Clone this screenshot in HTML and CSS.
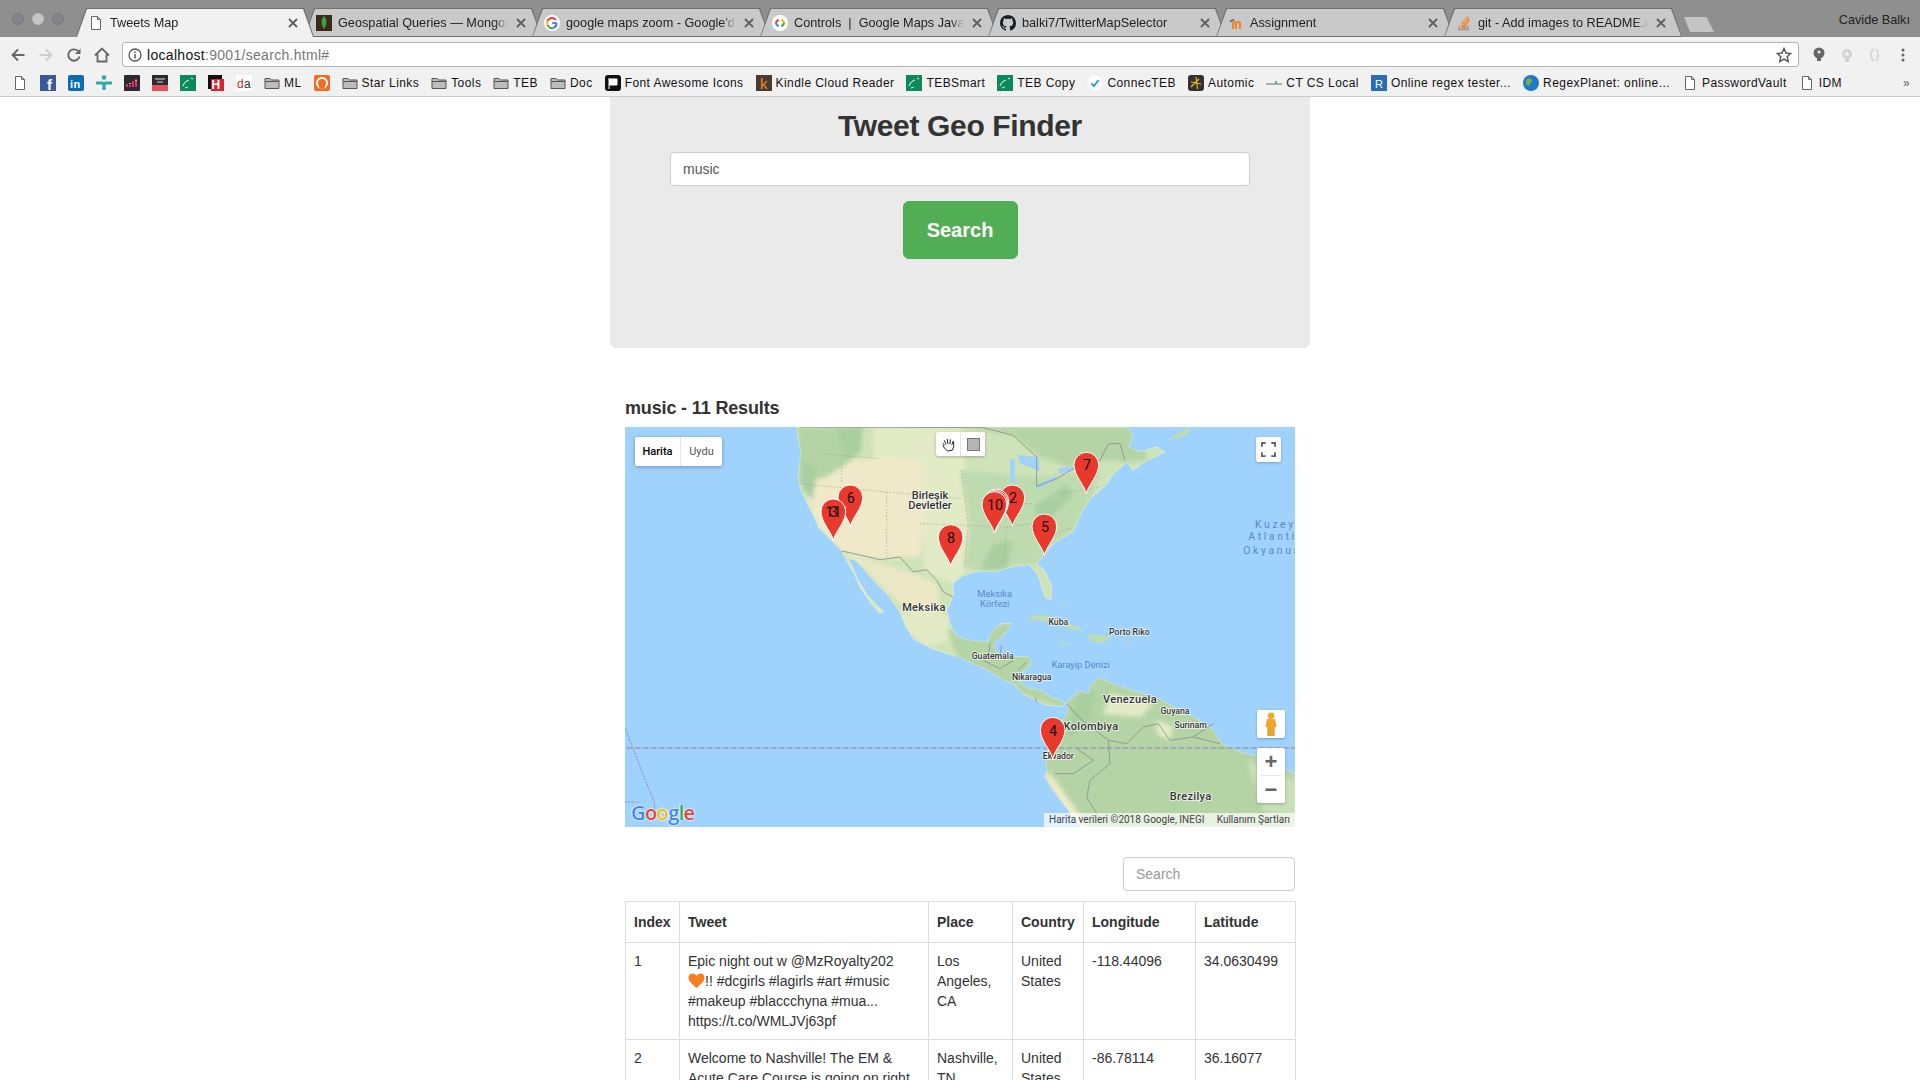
FILE: index.html
```html
<!DOCTYPE html>
<html>
  <head>
    <meta charset="utf-8">
    <title>Tweets Map</title>
    <link rel="stylesheet" href="styles.css">
  </head>
  <body>
    <svg class="defs" width="0" height="0">
      <symbol id="doc" viewBox="0 0 16 16"><path d="M3.5 1.5h6l3 3v10h-9z M9.5 1.5v3h3" fill="#fff" stroke="#666" stroke-width="1"/></symbol>
      <symbol id="folder" viewBox="0 0 16 16"><path d="M1 3.5h5l1.5 1.5h7.500v8.500h-14z" fill="#bdbdbd" stroke="#555"/><path d="M1 6.500h14" stroke="#555"/></symbol>
      <symbol id="x" viewBox="0 0 10 10"><path d="M1 1l8 8M9 1l-8 8" stroke="#5f5f5f" stroke-width="1.800"/></symbol>
      <symbol id="teb" viewBox="0 0 16 16"><rect width="16" height="16" fill="#0a8a5c"/><path d="M3 11c1-3 3-5 6-6M11 3l2 1M5 13l3-1" stroke="#bfe8d4" stroke-width="1.200" fill="none"/></symbol>
    </svg>

    <div class="tabstrip">
      <div class="lights">
        <span class="light"></span>
        <span class="light light-mid"></span>
        <span class="light"></span>
      </div>
      <div class="tab tab-active">
        <svg class="favicon"><use href="#doc"/></svg>
        <span class="tab-title">Tweets Map</span>
        <svg class="tab-close"><use href="#x"/></svg>
      </div>
      <div class="tab">
        <svg class="favicon" viewBox="0 0 16 16"><rect width="16" height="16" fill="#3b2a1c"/><path d="M8 1c3 3 3.500 8 0 13c-3.500-5-3-10 0-13z" fill="#3fa037"/></svg>
        <span class="tab-title">Geospatial Queries — MongoDB Manual</span>
        <svg class="tab-close"><use href="#x"/></svg>
      </div>
      <div class="tab">
        <svg class="favicon" viewBox="0 0 16 16"><circle cx="8" cy="8" r="8" fill="#fff"/><path d="M12.500 8H8.300" stroke="#4285f4" stroke-width="2"/><path d="M12 5a5 5 0 0 0-4-2" stroke="#ea4335" stroke-width="2" fill="none"/><path d="M8 3a5 5 0 0 0-4.500 3" stroke="#ea4335" stroke-width="2" fill="none"/><path d="M3.500 6a5 5 0 0 0 0 4" stroke="#fbbc05" stroke-width="2" fill="none"/><path d="M3.500 10a5 5 0 0 0 6 3" stroke="#34a853" stroke-width="2" fill="none"/><path d="M9.500 13a5 5 0 0 0 3-5" stroke="#4285f4" stroke-width="2" fill="none"/></svg>
        <span class="tab-title">google maps zoom - Google'da Ara</span>
        <svg class="tab-close"><use href="#x"/></svg>
      </div>
      <div class="tab">
        <svg class="favicon" viewBox="0 0 16 16"><circle cx="8" cy="8" r="8" fill="#fff"/><path d="M6.500 4.500L3.500 8" stroke="#ea4335" stroke-width="2"/><path d="M3.500 8l3 3.500" stroke="#4285f4" stroke-width="2"/><path d="M9.500 4.500l3 3.500" stroke="#fbbc05" stroke-width="2"/><path d="M12.500 8l-3 3.500" stroke="#34a853" stroke-width="2"/></svg>
        <span class="tab-title">Controls &nbsp;|&nbsp; Google Maps JavaScript API</span>
        <svg class="tab-close"><use href="#x"/></svg>
      </div>
      <div class="tab">
        <svg class="favicon" viewBox="0 0 16 16"><path d="M8 0C3.580 0 0 3.580 0 8c0 3.540 2.290 6.530 5.470 7.590.4.070.55-.17.55-.38 0-.19-.01-.82-.01-1.490-2.010.37-2.530-.49-2.690-.94-.09-.23-.48-.94-.82-1.130-.28-.15-.68-.52-.01-.53.63-.01 1.080.58 1.230.82.72 1.210 1.870.87 2.330.66.07-.52.28-.87.51-1.070-1.780-.2-3.640-.89-3.640-3.950 0-.87.31-1.590.82-2.150-.08-.2-.36-1.020.08-2.120 0 0 .67-.21 2.200.82.64-.18 1.320-.27 2-.27.68 0 1.360.09 2 .27 1.530-1.040 2.200-.82 2.200-.82.44 1.100.16 1.920.08 2.120.51.56.82 1.270.82 2.150 0 3.070-1.870 3.750-3.650 3.950.29.25.54.73.54 1.480 0 1.070-.01 1.930-.01 2.200 0 .21.15.46.55.38A8.013 8.013 0 0016 8c0-4.420-3.580-8-8-8z" fill="#1b1f23"/></svg>
        <span class="tab-title">balki7/TwitterMapSelector</span>
        <svg class="tab-close"><use href="#x"/></svg>
      </div>
      <div class="tab">
        <svg class="favicon" viewBox="0 0 16 16"><path d="M5 14V8.500c0-2 3-2 3 0V14M8 8.500c0-2 4-2 4 0V14" fill="none" stroke="#f58220" stroke-width="2"/><path d="M1 6l4-2 2 1-4 2z" fill="#666"/></svg>
        <span class="tab-title">Assignment</span>
        <svg class="tab-close"><use href="#x"/></svg>
      </div>
      <div class="tab">
        <svg class="favicon" viewBox="0 0 16 16"><path d="M3 10.500v4h9v-4" fill="none" stroke="#999" stroke-width="1.300"/><path d="M5 12.500h5.500M5 10.500l5.500.6M5.500 8.200l5.300 1.500M6.800 5.800l4.700 2.700M8.800 3.500l3.800 3.900M11 1.500l2.300 4.800" stroke="#f48024" stroke-width="1.300"/></svg>
        <span class="tab-title">git - Add images to README.md on GitHub</span>
        <svg class="tab-close"><use href="#x"/></svg>
      </div>
      <div class="newtab"></div>
      <div class="username">Cavide Balkı</div>
    </div>

    <div class="toolbar">
      <svg class="nav-icon" viewBox="0 0 16 16"><path d="M14.500 8H2.500M8 2.500L2.500 8 8 13.500" fill="none" stroke="#666" stroke-width="1.800"/></svg>
      <svg class="nav-icon" viewBox="0 0 16 16"><path d="M1.500 8h12M8 2.500L13.500 8 8 13.500" fill="none" stroke="#cfcfcf" stroke-width="1.800"/></svg>
      <svg class="nav-icon" viewBox="0 0 16 16"><path d="M13.500 9.500A5.700 5.700 0 1 1 12 4" fill="none" stroke="#666" stroke-width="1.900"/><path d="M14.500 1.500v5.500h-5.500z" fill="#666"/></svg>
      <svg class="nav-icon" viewBox="0 0 16 16"><path d="M1 8.500L8 1.500l7 7M3.500 7v7.500h9V7" fill="none" stroke="#666" stroke-width="1.800"/></svg>
      <div class="omnibox">
        <svg class="info-icon" viewBox="0 0 14 14"><circle cx="7" cy="7" r="6" fill="none" stroke="#555" stroke-width="1.300"/><path d="M7 6v4.500M7 3.500v1.400" stroke="#555" stroke-width="1.500"/></svg>
        <span class="url-host">localhost</span><span class="url-rest">:9001/search.html#</span>
        <svg class="star-icon" viewBox="0 0 16 16"><path d="M8 1.500l2 4.500 4.800.5-3.600 3.200 1 4.800L8 12.100l-4.200 2.400 1-4.800L1.200 6.500 6 6z" fill="none" stroke="#555" stroke-width="1.400"/></svg>
      </div>
      <div class="ext-icons">
        <svg class="ext-icon" viewBox="0 0 16 16"><circle cx="8" cy="6" r="5.500" fill="#666"/><rect x="6" y="6" width="4" height="8" fill="#666"/><circle cx="8" cy="5" r="1.500" fill="#f1f1f1"/></svg>
        <svg class="ext-icon" viewBox="0 0 16 16"><circle cx="8" cy="7" r="5" fill="#d2d2d2"/><circle cx="8" cy="7" r="2" fill="#f1f1f1"/><rect x="6" y="12" width="4" height="3" fill="#cfcfcf"/></svg>
        <svg class="ext-icon" viewBox="0 0 16 16"><path d="M7 2C3 4 3 11 7 14M9 2c3 3 3 9 0 12" fill="none" stroke="#d8d8d8" stroke-width="2"/></svg>
        <svg class="ext-icon" viewBox="0 0 16 16"><circle cx="8" cy="3" r="1.500" fill="#666"/><circle cx="8" cy="8" r="1.500" fill="#666"/><circle cx="8" cy="13" r="1.500" fill="#666"/></svg>
      </div>
    </div>

    <div class="bookmarks">
      <div class="bm"><svg class="bm-icon"><use href="#doc"/></svg></div>
      <div class="bm"><svg class="bm-icon" viewBox="0 0 16 16"><rect width="16" height="16" fill="#3b5998"/><text class="ico-f" x="7" y="15">f</text></svg></div>
      <div class="bm"><svg class="bm-icon" viewBox="0 0 16 16"><rect width="16" height="16" rx="2" fill="#0b6cb0"/><text class="ico-in" x="2" y="13">in</text></svg></div>
      <div class="bm"><svg class="bm-icon" viewBox="0 0 16 16"><circle cx="8" cy="2.500" r="2.300" fill="#2fa9a0"/><path d="M0 8h6l2 1 2-1h6M8 8v7" stroke="#2fa9a0" stroke-width="3.200"/></svg></div>
      <div class="bm"><svg class="bm-icon" viewBox="0 0 16 16"><rect width="16" height="16" rx="1" fill="#2a2a33"/><path d="M3 12V9M6 12V10M9 12V6M12 12V4" stroke="#e0296f" stroke-width="2"/><path d="M6 9V8M12 6V5" stroke="#f4c21f" stroke-width="2"/></svg></div>
      <div class="bm"><svg class="bm-icon" viewBox="0 0 16 16"><rect width="16" height="10" fill="#2b2b2b"/><rect y="10" width="16" height="6" fill="#e8505b"/><path d="M3 4h10M5 7h6" stroke="#ddd"/></svg></div>
      <div class="bm"><svg class="bm-icon"><use href="#teb"/></svg></div>
      <div class="bm"><svg class="bm-icon" viewBox="0 0 16 16"><rect width="14" height="14" fill="#111"/><rect x="3" y="4" width="13" height="12" fill="#d9272e"/><text class="ico-h" x="3.500" y="14">H</text></svg></div>
      <div class="bm"><svg class="bm-icon" viewBox="0 0 16 16"><rect width="16" height="16" fill="#fff"/><text class="ico-da" x="1" y="13"><tspan fill="#e3212a">d</tspan><tspan fill="#333">a</tspan></text></svg></div>
      <div class="bm"><svg class="bm-icon"><use href="#folder"/></svg>ML</div>
      <div class="bm"><svg class="bm-icon" viewBox="0 0 16 16"><rect width="16" height="16" rx="2" fill="#f26d21"/><circle cx="8" cy="8" r="5" fill="none" stroke="#fff" stroke-width="2"/><circle cx="8" cy="11" r="3" fill="#f26d21"/></svg></div>
      <div class="bm"><svg class="bm-icon"><use href="#folder"/></svg>Star Links</div>
      <div class="bm"><svg class="bm-icon"><use href="#folder"/></svg>Tools</div>
      <div class="bm"><svg class="bm-icon"><use href="#folder"/></svg>TEB</div>
      <div class="bm"><svg class="bm-icon"><use href="#folder"/></svg>Doc</div>
      <div class="bm"><svg class="bm-icon" viewBox="0 0 16 16"><rect width="16" height="16" rx="3" fill="#111"/><path d="M4 3v11M4 4h8v6H4" fill="#fff" stroke="#fff"/></svg>Font Awesome Icons</div>
      <div class="bm"><svg class="bm-icon" viewBox="0 0 16 16"><rect width="16" height="16" fill="#4a3a30"/><text class="ico-k" x="4" y="14">k</text></svg>Kindle Cloud Reader</div>
      <div class="bm"><svg class="bm-icon"><use href="#teb"/></svg>TEBSmart</div>
      <div class="bm"><svg class="bm-icon"><use href="#teb"/></svg>TEB Copy</div>
      <div class="bm"><svg class="bm-icon" viewBox="0 0 16 16"><circle cx="8" cy="8" r="7.500" fill="#fff"/><path d="M4.500 8.500l2.500 2.500 4.500-6" fill="none" stroke="#2a9fe0" stroke-width="2"/></svg>ConnecTEB</div>
      <div class="bm"><svg class="bm-icon" viewBox="0 0 16 16"><rect width="16" height="16" rx="3" fill="#333"/><path d="M8 2l1.500 12M3 7l10 2M3 12l8-8" stroke="#e8b923" stroke-width="1.200"/></svg>Automic</div>
      <div class="bm"><svg class="bm-icon" viewBox="0 0 16 16"><path d="M0 9h16" stroke="#999" stroke-width="1.500"/><path d="M10 6v3" stroke="#6a9" stroke-width="2"/></svg>CT CS Local</div>
      <div class="bm"><svg class="bm-icon" viewBox="0 0 16 16"><rect width="16" height="16" fill="#2a6db5"/><text class="ico-r" x="4" y="13">R</text></svg>Online regex tester...</div>
      <div class="bm"><svg class="bm-icon" viewBox="0 0 16 16"><circle cx="8" cy="8" r="8" fill="#1f78c8"/><path d="M3 5c3-3 6-2 6 1s-3 2-3 5c-2 0-4-3-3-6z" fill="#6fae55"/></svg>RegexPlanet: online...</div>
      <div class="bm"><svg class="bm-icon"><use href="#doc"/></svg>PasswordVault</div>
      <div class="bm"><svg class="bm-icon"><use href="#doc"/></svg>IDM</div>
      <div class="bm-more">»</div>
    </div>

    <div class="page">
      <div class="container">
        <div class="jumbotron">
          <h1 class="title">Tweet Geo Finder</h1>
          <input class="search-input" type="text" value="music">
          <button class="search-btn" type="button">Search</button>
        </div>

        <h4 class="results-title">music - 11 Results</h4>

        <div class="map">
          <svg class="map-canvas" viewBox="-465 0 2010 1200">
            <defs>
              <path id="land" d="M50,0 L55,30 62,70 60,110 55,150 62,185 80,225 100,265 118,305 150,335 185,372 205,410 235,460 262,505 290,535 312,555 298,558 270,525 240,480 222,430 205,395 225,398 255,430 285,465 325,505 360,555 378,600 400,635 450,662 500,680 545,692 585,712 625,730 665,755 705,772 728,800 760,815 800,835 840,838 862,828 865,850 850,880 838,930 815,958 798,990 802,1030 795,1050 820,1090 850,1130 880,1170 905,1200 L1545,1200 1545,1040 1500,1020 1440,990 1380,975 1325,950 1295,905 1245,872 1185,842 1130,812 1060,792 1000,772 960,752 935,772 925,800 905,792 875,812 855,832 835,818 812,812 785,792 750,785 722,772 718,745 755,708 745,690 705,690 650,680 640,650 668,625 695,590 665,590 635,615 625,645 580,642 530,630 510,592 500,550 520,505 518,470 545,448 590,432 650,432 700,418 748,412 775,445 795,510 812,518 815,480 795,432 770,410 820,350 880,312 905,255 935,210 975,178 1000,140 1040,105 1060,130 1100,100 1155,75 1130,60 1080,75 1045,60 1060,25 1040,0 Z"/>
              <clipPath id="land-clip"><use href="#land"/></clipPath>
              <filter id="soft" x="-5%" y="-5%" width="110%" height="110%"><feGaussianBlur stdDeviation="6"/></filter>
              <path id="pin" d="M0 0C-6 -27 -37 -54 -37 -87A37 37 0 1 1 37 -87C37 -54 6 -27 0 0Z"/>
            </defs>

            <rect class="water" x="-465" y="0" width="2010" height="1200"/>
            <use href="#land" class="land"/>
            <g clip-path="url(#land-clip)">
              <g filter="url(#soft)">
                <path class="land-pale" d="M280,0 L545,0 565,300 560,430 520,470 430,430 430,290 420,120 280,100Z"/>
                <path class="land-tan" d="M100,90 L425,100 430,300 420,390 360,390 300,398 245,385 185,372 150,335 118,305 80,225Z"/>
                <path class="land-mex" d="M190,375 L400,440 470,470 480,560 400,560 330,500 250,420Z"/>
                <path class="land-pale" d="M205,395 L320,520 300,560 230,470Z M345,560 L500,560 510,640 440,660 390,620Z"/>
                <path class="land-green" d="M540,130 L780,150 960,130 935,210 880,312 820,350 770,410 700,415 590,430 550,420 570,300Z"/>
                <path class="land-forest" d="M540,0 L1080,0 1100,100 1040,105 960,100 880,125 780,90 700,25Z M50,0 L170,0 230,90 140,150 55,170Z"/>
                <path class="land-forest" d="M500,610 L700,585 770,700 790,780 960,740 1545,760 1545,1200 905,1200 815,1045 790,1030 780,960 860,850 700,790 540,710Z"/>
                <path class="land-dark" d="M170,0 L250,0 240,80 190,100Z M65,100 L110,120 100,220 70,190Z M760,240 L860,170 880,200 790,300Z M640,350 L700,340 680,430 600,430Z M890,800 L950,790 930,880 860,940Z"/>
                <path class="land-pale" d="M990,800 L1120,830 1080,870 970,860Z M1130,880 L1180,900 1170,940 1130,920Z"/>
                <path class="land-light" d="M1400,1000 L1545,1060 1545,1200 1450,1150Z"/>
                <path class="land-tan" d="M795,1045 L815,1045 925,1200 880,1200Z"/>
              </g>
            </g>

            <path class="water" d="M690,94 L705,100 704,170 692,165Z M712,84 L775,90 780,132 745,118 722,112Z M768,178 L825,146 832,156 775,184Z M832,126 L880,118 882,128 840,140Z"/>
            <path class="island" d="M1175,30 L1230,0 1225,22 1190,36Z M740,575 Q790,550 850,585 Q890,595 910,612 L870,605 Q810,580 740,578Z M925,622 L1000,630 960,650 930,640Z M845,645 L880,650 850,653Z M1035,645 L1062,648 1038,652Z M850,525 L858,545 848,535Z"/>

            <path class="border" d="M185,372 L245,385 300,398 360,390 400,435 440,428 470,460 490,495 520,510"/>
            <path class="border" d="M60,0 L610,2 700,25 770,90 770,178 830,155 880,125 960,100 985,50 1020,50 1035,100"/>
            <path class="border" d="M630,650 L625,690 660,685 665,655M610,700 L660,725 700,700 M740,705 L715,730 M765,810 L770,825"/>
            <path class="border" d="M860,830 L895,870 985,940 1040,950 1090,900 1135,890M985,940 L990,1010 930,1060 920,1110 950,1160 M890,965 L940,1000 880,1040 825,1040 M1135,890 L1170,940 1240,930 1300,890 M1240,930 L1320,950"/>
            <path class="state" d="M120,80 L300,95 M60,170 L320,195 545,215 M320,195 L320,395 M185,90 L185,170 M420,290 L560,295 680,300 760,290 M545,130 L565,290 555,420 M680,300 L670,410 M620,230 L760,230 M780,340 L880,300 M840,200 L960,180"/>

            <path class="equator" d="M-460,963 L1545,963"/>
            <path class="dateline" d="M-465,903 L-378,1125 -375,1155"/>
            <path class="dateline" d="M-465,1125 L-420,1125"/>

            <text class="lbl" x="450" y="217">Birleşik</text>
            <text class="lbl" x="450" y="247">Devletler</text>
            <text class="lbl lbl-big" x="432" y="553">Meksika</text>
            <text class="lbl lbl-big" x="933" y="908">Kolombiya</text>
            <text class="lbl lbl-big" x="1050" y="827">Venezuela</text>
            <text class="lbl lbl-big" x="1232" y="1120">Brezilya</text>
            <text class="lbl lbl-sm" x="1185" y="861">Guyana</text>
            <text class="lbl lbl-sm" x="1232" y="903">Surinam</text>
            <text class="lbl lbl-sm" x="835" y="996">Ekvador</text>
            <text class="lbl lbl-sm" x="638" y="696">Guatemala</text>
            <text class="lbl lbl-sm" x="755" y="760">Nikaragua</text>
            <text class="lbl lbl-sm" x="835" y="593">Küba</text>
            <text class="lbl lbl-sm" x="1048" y="623">Porto Riko</text>
            <text class="lbl-water" x="644" y="510">Meksika</text>
            <text class="lbl-water" x="644" y="540">Körfezi</text>
            <text class="lbl-water" x="902" y="724">Karayip Denizi</text>
            <text class="lbl-ocean" x="1425" y="302">Kuzey</text>
            <text class="lbl-ocean" x="1405" y="340">Atlantik</text>
            <text class="lbl-ocean" x="1390" y="380">Okyanusu</text>

            <use href="#pin" class="pin" x="211" y="298"/>
            <text class="pin-num" x="212" y="229">6</text>
            <use href="#pin" class="pin" x="160" y="340"/>
            <use href="#pin" class="pin" x="160" y="340"/>
            <text class="pin-num" x="160" y="271">11</text>
            <text class="pin-num" x="161" y="271">3</text>
            <use href="#pin" class="pin" x="512" y="417"/>
            <text class="pin-num" x="513" y="349">8</text>
            <use href="#pin" class="pin" x="697" y="298"/>
            <text class="pin-num" x="699" y="229">2</text>
            <use href="#pin" class="pin" x="649" y="310"/>
            <use href="#pin" class="pin" x="646" y="314"/>
            <use href="#pin" class="pin" x="643" y="318"/>
            <text class="pin-num" x="645" y="250">10</text>
            <use href="#pin" class="pin" x="793" y="385"/>
            <text class="pin-num" x="795" y="316">5</text>
            <use href="#pin" class="pin" x="919" y="200"/>
            <text class="pin-num" x="921" y="129">7</text>
            <use href="#pin" class="pin" x="818" y="995"/>
            <text class="pin-num" x="819" y="928">4</text>
          </svg>

          <div class="map-type">
            <span class="map-type-on">Harita</span>
            <span class="map-type-off">Uydu</span>
          </div>

          <div class="draw-tools">
            <span class="draw-tool">
              <svg class="hand-icon" viewBox="0 0 16 16"><path d="M4 9L2 6.500M5.500 8L3.500 3.500M7.500 7.500L6.500 2M9.500 7.500L10 2.500M11.500 8.500L13 4.500C14 7 14 11 12 14L7 15 3.500 11.500 2 8.500" fill="#fff" stroke="#111" stroke-width="1"/></svg>
            </span>
            <span class="draw-tool draw-tool-shape"><span class="square-icon"></span></span>
          </div>

          <div class="map-btn fullscreen">
            <svg class="fs-icon" viewBox="0 0 16 16"><path d="M1 5V1h4M11 1h4v4M15 11v4h-4M5 15H1v-4" fill="none" stroke="#666" stroke-width="2"/></svg>
          </div>

          <div class="map-btn pegman">
            <svg class="peg-icon" viewBox="0 0 12 26"><circle cx="6" cy="4" r="3.500" fill="#f5a623"/><path d="M2 8h8l1.500 8-2-.5V26H6.500v-8h-1v8H2.500V15.500l-2 .5z" fill="#f5a623" stroke="#c9821a" stroke-width=".6"/></svg>
          </div>

          <div class="zoom-ctl">
            <span class="zoom-plus">+</span>
            <span class="zoom-minus">−</span>
          </div>

          <div class="google-logo"><span class="g-blue">G</span><span class="g-red">o</span><span class="g-yellow">o</span><span class="g-blue">g</span><span class="g-green">l</span><span class="g-red">e</span></div>

          <div class="attribution">
            <span>Harita verileri ©2018 Google, INEGI</span>
            <span>Kullanım Şartları</span>
          </div>
        </div>

        <div class="table-search">
          <input class="filter-input" type="text" placeholder="Search">
        </div>

        <table class="results">
          <thead>
            <tr>
              <th class="col-index">Index</th>
              <th class="col-tweet">Tweet</th>
              <th class="col-place">Place</th>
              <th class="col-country">Country</th>
              <th class="col-lon">Longitude</th>
              <th class="col-lat">Latitude</th>
            </tr>
          </thead>
          <tbody>
            <tr>
              <td>1</td>
              <td>Epic night out w @MzRoyalty202<br><svg class="heart" viewBox="0 0 16 16"><path d="M8 15C3 11 0 8 0 4.800 0 2 2 .5 4 .5 6 .5 7.300 1.500 8 3 8.700 1.500 10 .5 12 .5c2 0 4 1.500 4 4.300C16 8 13 11 8 15z" fill="#f4801f"/></svg>!! #dcgirls #lagirls #art #music<br>#makeup #blaccchyna #mua...<br>https://t.co/WMLJVj63pf</td>
              <td>Los Angeles, CA</td>
              <td>United States</td>
              <td>-118.44096</td>
              <td>34.0630499</td>
            </tr>
            <tr>
              <td>2</td>
              <td>Welcome to Nashville! The EM &amp;<br>Acute Care Course is going on right</td>
              <td>Nashville, TN</td>
              <td>United States</td>
              <td>-86.78114</td>
              <td>36.16077</td>
            </tr>
          </tbody>
        </table>
      </div>
    </div>
  </body>
</html>
```

FILE: styles.css
```css
html, body {
  height: 100%;
  margin: 0;
  overflow: hidden;
}

body {
  font-family: "Liberation Sans", Arial, sans-serif;
  font-size: 14px;
  color: #333;
  background-color: #fff;
  display: flex;
  flex-direction: column;
}

.defs {
  position: absolute;
}

/* browser tabs */
.tabstrip {
  display: flex;
  height: 37px;
  flex-shrink: 0;
  background-color: #8f8f8f;
  align-items: flex-end;
}

.lights {
  width: 76px;
  height: 37px;
  flex-shrink: 0;
  display: flex;
  gap: 8px;
  padding: 13px 0 0 12px;
  box-sizing: border-box;
}

.light {
  width: 12px;
  height: 12px;
  border-radius: 50%;
  background-color: #84848c;
  border: 1px solid #77777f;
  box-sizing: border-box;
}

.light-mid {
  background-color: #c6c6c6;
  border-color: #bcbcbc;
}

.tab {
  position: relative;
  width: 238px;
  height: 29px;
  margin-right: -10px;
  flex-shrink: 0;
  display: flex;
  align-items: center;
  padding: 0 16px 0 12px;
  box-sizing: border-box;
  background-color: #6f6f6f;
  clip-path: polygon(0 100%, 10px 0, calc(100% - 10px) 0, 100% 100%);
  font-size: 12.700px;
  color: #222;
}

.tab::before {
  content: "";
  position: absolute;
  inset: 1px 1px 1px 1px;
  background-color: #c9c9c9;
  clip-path: polygon(0 100%, 10px 0, calc(100% - 10px) 0, 100% 100%);
}

.tab-active {
  z-index: 2;
}

.tab-active::before {
  inset: 1px 1px 0 1px;
  background-color: #f1f1f1;
}

.favicon, .tab-title, .tab-close {
  position: relative;
}

.favicon {
  width: 16px;
  height: 16px;
  flex-shrink: 0;
}

.tab-title {
  flex: 1;
  margin-left: 6px;
  margin-right: 8px;
  white-space: nowrap;
  overflow: hidden;
  -webkit-mask-image: linear-gradient(to right, #000 92%, transparent 100%);
  mask-image: linear-gradient(to right, #000 92%, transparent 100%);
}

.tab-close {
  width: 10px;
  height: 10px;
  flex-shrink: 0;
}

.newtab {
  width: 30px;
  height: 15px;
  margin: 0 0 5px 12px;
  flex-shrink: 0;
  background-color: #c4c4c4;
  clip-path: polygon(0 0, 75% 0, 100% 100%, 20% 100%);
}

.username {
  margin-left: auto;
  padding: 0 10px 10px 0;
  font-size: 12.700px;
  color: #222;
}

/* toolbar */
.toolbar {
  display: flex;
  align-items: center;
  height: 31px;
  flex-shrink: 0;
  box-sizing: border-box;
  padding: 4px 0 0 10px;
  background-color: #f1f1f1;
}

.nav-icon {
  width: 16px;
  height: 16px;
  margin-right: 12px;
  flex-shrink: 0;
}

.omnibox {
  width: 1677px;
  height: 25px;
  flex-shrink: 0;
  display: flex;
  align-items: center;
  box-sizing: border-box;
  padding: 0 6px 0 5px;
  background-color: #fff;
  border: 1px solid #b4b4b4;
  border-radius: 3px;
  font-size: 14px;
  letter-spacing: .3px;
}

.info-icon {
  width: 14px;
  height: 14px;
  margin-right: 5px;
}

.url-host {
  color: #111;
}

.url-rest {
  color: #777;
}

.star-icon {
  width: 16px;
  height: 16px;
  margin-left: auto;
}

.ext-icons {
  display: flex;
  gap: 12px;
  margin-left: 12px;
}

.ext-icon {
  width: 16px;
  height: 16px;
}

/* bookmarks */
.bookmarks {
  display: flex;
  align-items: center;
  gap: 12px;
  height: 26px;
  flex-shrink: 0;
  padding: 2px 0 0 12px;
  background-color: #f1f1f1;
  border-bottom: 1px solid #c9c9c9;
  font-size: 12px;
  letter-spacing: .43px;
  color: #111;
  white-space: nowrap;
}

.bm {
  display: flex;
  align-items: center;
  gap: 4px;
}

.bm-icon {
  width: 16px;
  height: 16px;
  flex-shrink: 0;
}

.bm-more {
  margin-left: auto;
  padding-right: 10px;
  color: #666;
}

.ico-f {
  font: bold 15px "Liberation Sans", sans-serif;
  fill: #fff;
}

.ico-in {
  font: bold 11px "Liberation Sans", sans-serif;
  fill: #fff;
}

.ico-h {
  font: bold 12px "Liberation Sans", sans-serif;
  fill: #fff;
}

.ico-da {
  font: 12px "Liberation Sans", sans-serif;
}

.ico-k {
  font: 15px "Liberation Sans", sans-serif;
  fill: #f08a24;
}

.ico-r {
  font: 11px "Liberation Sans", sans-serif;
  fill: #fff;
}

/* page */
.page {
  flex: 1;
  overflow: hidden;
}

.container {
  width: 700px;
  margin: 0 auto;
}

.jumbotron {
  height: 251px;
  box-sizing: border-box;
  padding-top: 11px;
  background-color: #eaeaea;
  border-radius: 0 0 6px 6px;
  display: flex;
  flex-direction: column;
  align-items: center;
}

.title {
  margin: 0;
  font-size: 30px;
  line-height: 36px;
  font-weight: bold;
  letter-spacing: -.35px;
  color: #333;
}

.search-input {
  width: 580px;
  height: 34px;
  margin-top: 8px;
  box-sizing: border-box;
  padding: 6px 12px;
  font: 14px "Liberation Sans", Arial, sans-serif;
  color: #555;
  border: 1px solid #ccc;
  border-radius: 4px;
  background-color: #fff;
}

.search-btn {
  width: 115px;
  height: 58px;
  margin-top: 15px;
  font: bold 20px "Liberation Sans", Arial, sans-serif;
  color: #fff;
  background-color: #52ae55;
  border: 1px solid #4cae4c;
  border-radius: 6px;
}

.results-title {
  margin: 50px 15px 9px;
  font-size: 18px;
  line-height: 20px;
  font-weight: bold;
  letter-spacing: -.15px;
  color: #333;
}

/* map */
.map {
  position: relative;
  width: 670px;
  height: 400px;
  margin: 0 15px;
  overflow: hidden;
  font-family: Roboto, Arial, sans-serif;
}

.map-canvas {
  display: block;
  width: 670px;
  height: 400px;
}

.water {
  fill: #9fd3fe;
}

.land {
  fill: #cfe3b8;
  stroke: #dceccb;
  stroke-width: 3;
}

.land-tan {
  fill: #efe9c9;
}

.land-mex {
  fill: #ece8c6;
}

.land-pale {
  fill: #e2ebc5;
}

.land-light {
  fill: #c7e0b5;
}

.land-green {
  fill: #bedbb0;
}

.land-forest {
  fill: #b5d4a6;
}

.land-dark {
  fill: #a9cfa0;
}

.island {
  fill: #bfdcb0;
}

.border {
  fill: none;
  stroke: #8d8d8d;
  stroke-width: 2.500;
}

.state {
  fill: none;
  stroke: #a3a38f;
  stroke-width: 2;
  stroke-dasharray: 5 5;
}

.equator {
  fill: none;
  stroke: #9a9abb;
  stroke-width: 5;
  stroke-dasharray: 18 6;
}

.dateline {
  fill: none;
  stroke: #8b6f8c;
  stroke-width: 2;
  stroke-dasharray: 6 3;
}

.lbl, .lbl-water, .lbl-ocean {
  font-family: Roboto, Arial, sans-serif;
  paint-order: stroke;
}

.lbl, .lbl-water {
  text-anchor: middle;
}

.lbl {
  font-size: 33px;
  font-weight: 500;
  fill: #333;
  stroke: #fff;
  stroke-width: 5;
  stroke-opacity: .75;
}

.lbl-big {
  font-size: 33px;
  letter-spacing: 1px;
}

.lbl-sm {
  font-size: 26px;
}

.lbl-water {
  font-size: 28px;
  fill: #5a86cc;
}

.lbl-ocean {
  font-size: 31px;
  letter-spacing: 8px;
  fill: #5a86cc;
}

.pin {
  fill: #e9392d;
  stroke: #fff;
  stroke-width: 3;
}

.pin-num {
  font-family: Roboto, Arial, sans-serif;
  font-size: 43px;
  fill: #111;
  text-anchor: middle;
}

.map-type {
  position: absolute;
  left: 10px;
  top: 10px;
  height: 29px;
  display: flex;
  background-color: #fff;
  border-radius: 2px;
  box-shadow: 0 1px 4px rgba(0, 0, 0, .3);
  font-size: 11px;
  line-height: 29px;
}

.map-type-on {
  width: 45px;
  text-align: center;
  font-weight: 500;
  color: #000;
  border-right: 1px solid #e6e6e6;
}

.map-type-off {
  width: 41px;
  text-align: center;
  color: #555;
}

.draw-tools {
  position: absolute;
  left: 311px;
  top: 5px;
  height: 24px;
  display: flex;
  background-color: #fff;
  border-radius: 2px;
  box-shadow: 0 1px 3px rgba(0, 0, 0, .25);
}

.draw-tool {
  width: 24px;
  display: flex;
  align-items: center;
  justify-content: center;
}

.hand-icon {
  width: 15px;
  height: 15px;
}

.draw-tool-shape {
  border-left: 1px solid #e6e6e6;
}

.square-icon {
  width: 11px;
  height: 11px;
  background-color: #b5b5b5;
  border: 1px solid #777;
}

.map-btn {
  position: absolute;
  background-color: #fff;
  display: flex;
  align-items: center;
  justify-content: center;
  border-radius: 2px;
  box-shadow: 0 1px 3px rgba(0, 0, 0, .25);
}

.fullscreen {
  left: 631px;
  top: 10px;
  width: 25px;
  height: 25px;
}

.fs-icon {
  width: 15px;
  height: 15px;
}

.pegman {
  left: 632px;
  top: 283px;
  width: 28px;
  height: 28px;
}

.peg-icon {
  width: 12px;
  height: 24px;
}

.zoom-ctl {
  position: absolute;
  left: 632px;
  top: 321px;
  width: 28px;
  height: 55px;
  display: flex;
  flex-direction: column;
  background-color: #fff;
  border-radius: 2px;
  box-shadow: 0 1px 3px rgba(0, 0, 0, .25);
  font: bold 22px/27px "Liberation Sans", sans-serif;
  color: #666;
  text-align: center;
}

.zoom-plus {
  height: 27px;
  margin: 0 4px;
  border-bottom: 1px solid #e6e6e6;
}

.zoom-minus {
  height: 27px;
}

.google-logo {
  position: absolute;
  left: 6px;
  bottom: 2px;
  font: 600 20px/24px "Open Sans", sans-serif;
  letter-spacing: -.6px;
  text-shadow: 0 0 2px #fff, 0 0 2px #fff;
}

.g-blue { color: #4285f4; }
.g-red { color: #ea4335; }
.g-yellow { color: #fbbc05; }
.g-green { color: #34a853; }

.attribution {
  position: absolute;
  right: 0;
  bottom: 0;
  width: 251px;
  height: 14px;
  box-sizing: border-box;
  padding: 0 5px;
  display: flex;
  justify-content: space-between;
  background-color: rgba(255, 255, 255, .68);
  font-size: 10px;
  line-height: 14px;
  color: #444;
  white-space: nowrap;
}

/* table */
.table-search {
  display: flex;
  justify-content: flex-end;
  margin: 30px 15px 10px;
}

.filter-input {
  width: 172px;
  height: 34px;
  box-sizing: border-box;
  padding: 6px 12px;
  font: 14px "Liberation Sans", Arial, sans-serif;
  border: 1px solid #ccc;
  border-radius: 4px;
  color: #555;
}

.filter-input::placeholder {
  color: #999;
}

.results {
  width: 670px;
  margin: 0 15px;
  table-layout: fixed;
  border-collapse: collapse;
  line-height: 20px;
}

.results th, .results td {
  box-sizing: border-box;
  padding: 8px;
  border: 1px solid #ddd;
  text-align: left;
  vertical-align: top;
}

.results th {
  padding: 10px 8px;
  font-weight: bold;
}

.heart {
  width: 17px;
  height: 16px;
  vertical-align: -3px;
}

.col-index { width: 54px; }
.col-tweet { width: 249px; }
.col-place { width: 84px; }
.col-country { width: 71px; }
.col-lon { width: 112px; }
.col-lat { width: 100px; }
```
